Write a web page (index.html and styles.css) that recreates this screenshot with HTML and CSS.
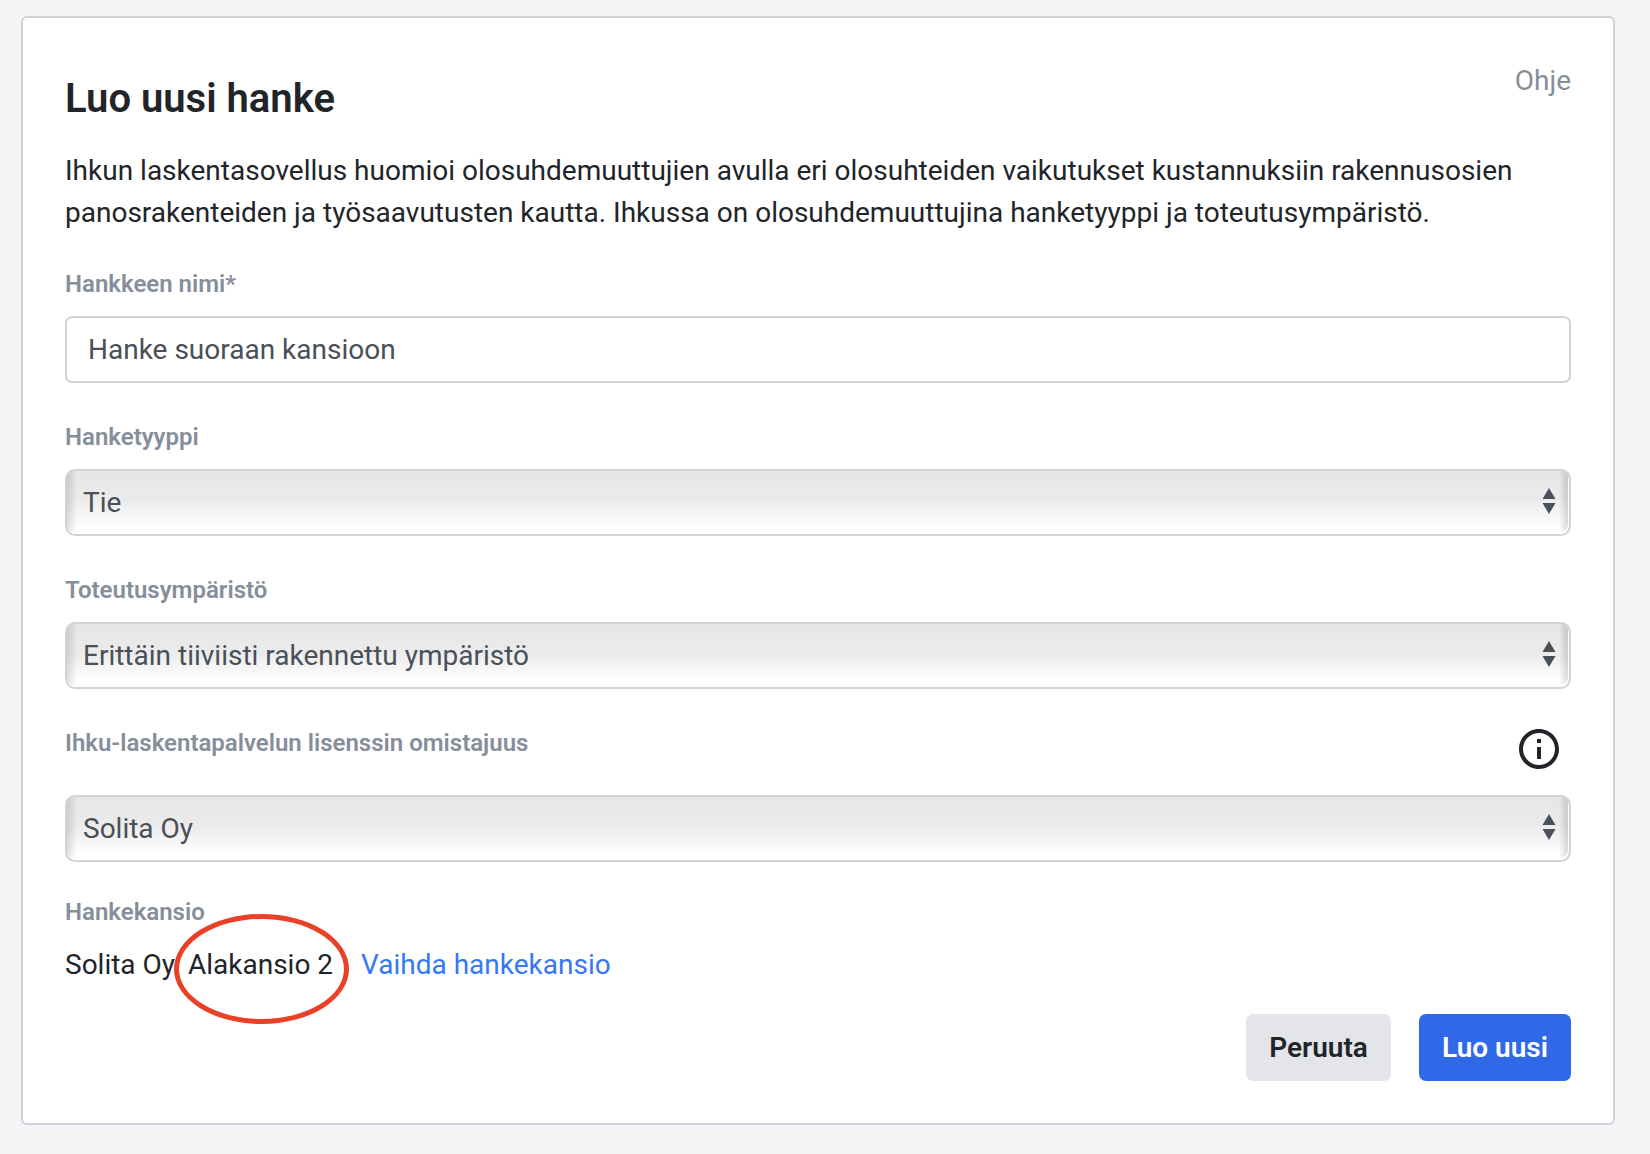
FILE: index.html
```html
<!DOCTYPE html>
<html lang="fi">
    <head>
        <meta charset="UTF-8">
        <meta name="viewport" content="width=device-width, initial-scale=1">
        <title>Luo uusi hanke</title>
        <link rel="stylesheet" href="styles.css">
    </head>
    <body>
        <main class="card">
            <div class="card-header">
                <h1>Luo uusi hanke</h1>
                <a href="#" class="help-link">Ohje</a>
            </div>

            <p class="intro">Ihkun laskentasovellus huomioi olosuhdemuuttujien avulla eri olosuhteiden vaikutukset kustannuksiin rakennusosien panosrakenteiden ja työsaavutusten kautta. Ihkussa on olosuhdemuuttujina hanketyyppi ja toteutusympäristö.</p>

            <form>
                <div class="field">
                    <div class="field-label">
                        <label for="nimi">Hankkeen nimi*</label>
                    </div>
                    <input type="text" id="nimi" class="control" value="Hanke suoraan kansioon">
                </div>

                <div class="field">
                    <div class="field-label">
                        <label for="tyyppi">Hanketyyppi</label>
                    </div>
                    <div class="select-wrap">
                        <select id="tyyppi" class="control">
                            <option>Tie</option>
                        </select>
                        <svg class="arrows" viewBox="0 0 14 26" aria-hidden="true"><path d="M7 0l6.5 11H.5zM7 26l6.5-11H.5z"/></svg>
                    </div>
                </div>

                <div class="field">
                    <div class="field-label">
                        <label for="ymparisto">Toteutusympäristö</label>
                    </div>
                    <div class="select-wrap">
                        <select id="ymparisto" class="control">
                            <option>Erittäin tiiviisti rakennettu ympäristö</option>
                        </select>
                        <svg class="arrows" viewBox="0 0 14 26" aria-hidden="true"><path d="M7 0l6.5 11H.5zM7 26l6.5-11H.5z"/></svg>
                    </div>
                </div>

                <div class="field">
                    <div class="field-label">
                        <label for="omistajuus">Ihku-laskentapalvelun lisenssin omistajuus</label>
                        <button type="button" class="info-button" aria-label="Lisätietoja">
                            <svg viewBox="0 0 24 24" aria-hidden="true"><path d="M11 7h2v2h-2zm0 4h2v6h-2zm1-9C6.48 2 2 6.48 2 12s4.48 10 10 10 10-4.48 10-10S17.52 2 12 2zm0 18c-4.41 0-8-3.59-8-8s3.59-8 8-8 8 3.59 8 8-3.59 8-8 8z"/></svg>
                        </button>
                    </div>
                    <div class="select-wrap">
                        <select id="omistajuus" class="control">
                            <option>Solita Oy</option>
                        </select>
                        <svg class="arrows" viewBox="0 0 14 26" aria-hidden="true"><path d="M7 0l6.5 11H.5zM7 26l6.5-11H.5z"/></svg>
                    </div>
                </div>

                <div class="folder">
                    <div class="field-label">Hankekansio</div>
                    <div class="folder-path">
                        <span>Solita Oy. <span class="folder-current">Alakansio 2</span></span>
                        <a href="#">Vaihda hankekansio</a>
                    </div>
                </div>

                <div class="actions">
                    <button type="button" class="btn">Peruuta</button>
                    <button type="submit" class="btn btn-primary">Luo uusi</button>
                </div>
            </form>
        </main>
    </body>
</html>
```
FILE: styles.css
```css
* {
    box-sizing: border-box;
}
body {
    margin: 0;
    background-color: #f4f5f6;
    font-family: Roboto, Arial, sans-serif;
    font-size: 28px;
    line-height: 42px;
    color: #212529;
}
.card {
    margin: 16px 35px 28px 21px;
    padding: 42px;
    background-color: #fff;
    border: 2px solid #ced2d9;
    border-radius: 6px;
}
.card-header {
    display: flex;
    justify-content: space-between;
    align-items: flex-start;
}
.card-header h1 {
    margin: 14px 0 0;
    font-size: 40px;
    line-height: 50px;
    font-weight: 600;
}
.help-link {
    color: #868e9b;
    text-decoration: none;
}
.intro {
    margin: 26px 0 32px;
}

.field + .field {
    margin-top: 36px;
}
.field-label {
    display: flex;
    justify-content: space-between;
    align-items: flex-start;
    margin-bottom: 14px;
    font-size: 24px;
    line-height: 36px;
    font-weight: 600;
    color: #868e9b;
}
.info-button {
    width: 48px;
    height: 48px;
    margin: 0 8px 8px;
    padding: 0;
    border: none;
    background: none;
    cursor: pointer;
}
.info-button svg {
    display: block;
    fill: #212529;
}

.control {
    display: block;
    width: 100%;
    height: 67px;
    padding: 0 21px;
    border: 2px solid #ced4da;
    border-radius: 7px;
    background-color: #fff;
    font-family: inherit;
    font-size: 28px;
    color: #495057;
}
.select-wrap {
    position: relative;
}
/* glossy select with shaded ends */
select.control {
    appearance: none;
    padding: 0 16px;
    border-radius: 10px;
    background-image:
        linear-gradient(to right, rgba(0, 0, 0, 0.12), rgba(0, 0, 0, 0) 10px),
        linear-gradient(to left, rgba(0, 0, 0, 0.16), rgba(0, 0, 0, 0) 10px),
        linear-gradient(#e6e6e6, #ebebeb 45%, #fff 92%);
    box-shadow: inset -1px -2px 1px #fff;
}
.arrows {
    position: absolute;
    top: 19px;
    right: 15px;
    width: 14px;
    height: 26px;
    fill: #495057;
    pointer-events: none;
}

.folder {
    margin-top: 32px;
}
.folder-path {
    display: flex;
    gap: 28px;
}
.folder-path a {
    color: #3478f6;
    text-decoration: none;
}
.folder-current {
    position: relative;
}
/* red ring round the chosen folder */
.folder-current::after {
    content: "";
    box-sizing: border-box;
    position: absolute;
    top: -34px;
    left: -14px;
    right: -16px;
    height: 110px;
    border: 5px solid #ea4025;
    border-radius: 50%;
    pointer-events: none;
}

.actions {
    display: flex;
    justify-content: flex-end;
    gap: 28px;
    margin-top: 28px;
}
.btn {
    height: 67px;
    padding: 0 23px;
    border: none;
    border-radius: 7px;
    background-color: #e4e5e9;
    font-family: inherit;
    font-size: 28px;
    font-weight: 600;
    color: #212529;
    cursor: pointer;
}
.btn-primary {
    background-color: #2f69e8;
    color: #fff;
}
```
